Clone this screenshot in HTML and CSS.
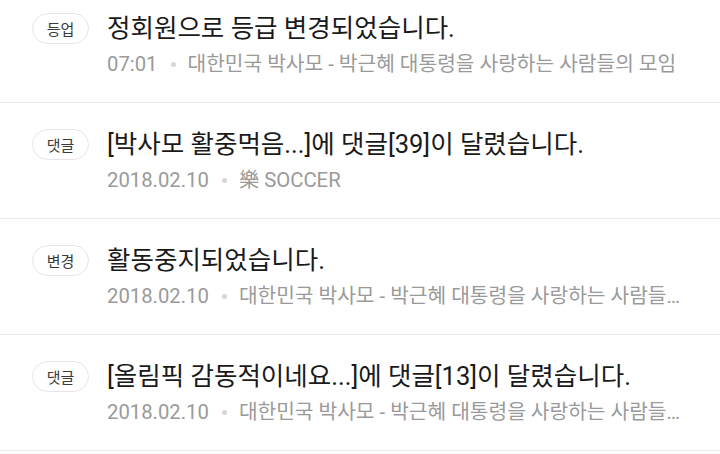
FILE: index.html
```html
<!DOCTYPE html>
<html lang="ko">
<head>
<meta charset="utf-8">
<title>알림</title>
<link rel="stylesheet" href="styles.css">
</head>
<body>
<ul class="list">
  <li class="item">
    <span class="badge">등업</span>
    <div class="body">
      <p class="title">정회원으로 등급 변경되었습니다.</p>
      <p class="meta"><span class="time">07:01</span><span class="dot"></span><span class="cafe">대한민국 박사모 - 박근혜 대통령을 사랑하는 사람들의 모임</span></p>
    </div>
  </li>
  <li class="item">
    <span class="badge">댓글</span>
    <div class="body">
      <p class="title">[박사모 활중먹음...]에 댓글[39]이 달렸습니다.</p>
      <p class="meta"><span class="time">2018.02.10</span><span class="dot"></span><span class="cafe">樂 SOCCER</span></p>
    </div>
  </li>
  <li class="item">
    <span class="badge">변경</span>
    <div class="body">
      <p class="title">활동중지되었습니다.</p>
      <p class="meta"><span class="time">2018.02.10</span><span class="dot"></span><span class="cafe">대한민국 박사모 - 박근혜 대통령을 사랑하는 사람들의 모임</span></p>
    </div>
  </li>
  <li class="item">
    <span class="badge">댓글</span>
    <div class="body">
      <p class="title">[올림픽 감동적이네요...]에 댓글[13]이 달렸습니다.</p>
      <p class="meta"><span class="time">2018.02.10</span><span class="dot"></span><span class="cafe">대한민국 박사모 - 박근혜 대통령을 사랑하는 사람들의 모임</span></p>
    </div>
  </li>
</ul>
</body>
</html>
```

FILE: styles.css
```css
html, body {
  margin: 0;
  padding: 0;
  background: #ffffff;
}
body {
  font-family: Roboto, "Noto Sans CJK KR", sans-serif;
  width: 720px;
  height: 454px;
  overflow: hidden;
}
.list {
  list-style: none;
  margin: -13px 0 0 0;
  padding: 0;
}
.item {
  display: flex;
  align-items: flex-start;
  gap: 18px;
  height: 115px;
  box-sizing: content-box;
  padding: 0 30px 0 32px;
  border-bottom: 1px solid #ebebeb;
}
.badge {
  flex: 0 0 auto;
  box-sizing: border-box;
  width: 57px;
  height: 31px;
  margin-top: 26px;
  border: 1px solid #e6e6e6;
  border-radius: 16px;
  display: flex;
  align-items: center;
  justify-content: center;
  font-size: 15px;
  color: #3a3a3a;
}
.body {
  flex: 1 1 auto;
  min-width: 0;
  padding-top: 25px;
}
.title {
  margin: 0;
  font-size: 25.5px;
  line-height: 32px;
  color: #1a1a1a;
  white-space: nowrap;
}
.meta {
  margin: 6px 0 0 0;
  font-size: 20.3px;
  line-height: 28px;
  color: #9a9a9a;
  white-space: nowrap;
  overflow: hidden;
  text-overflow: ellipsis;
}
.dot {
  display: inline-block;
  width: 5px;
  height: 5px;
  border-radius: 50%;
  background: #d6d6d6;
  vertical-align: middle;
  margin: 0 12px 0 13px;
  position: relative;
  top: -1px;
}
```
